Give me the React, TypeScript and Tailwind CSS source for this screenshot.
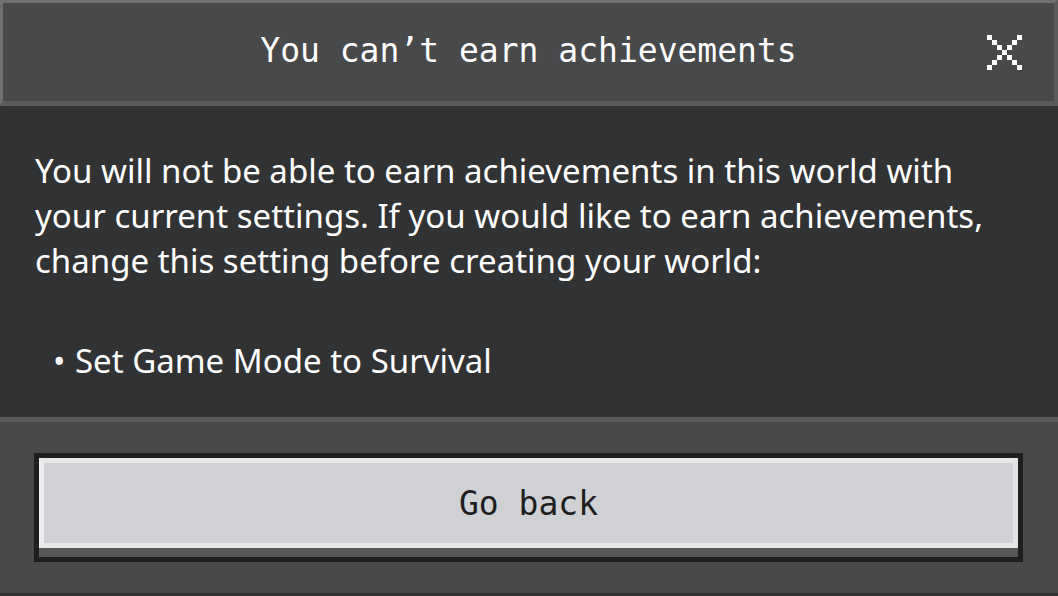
import React from "react";

function PixelX() {
  const cells: [number, number][] = [
    [0, 0], [6, 0], [1, 1], [5, 1], [2, 2], [4, 2], [3, 3],
    [2, 4], [4, 4], [1, 5], [5, 5], [0, 6], [6, 6],
  ];
  return (
    <svg width="35" height="35" viewBox="0 0 7 7" shapeRendering="crispEdges">
      {cells.map(([x, y]) => (
        <rect key={`${x}-${y}`} x={x} y={y} width="1" height="1" fill="#ffffff" />
      ))}
    </svg>
  );
}

export default function App() {
  const mono = { fontFamily: '"DejaVu Sans Mono", "Liberation Mono", monospace' };
  return (
    <div className="w-[1058px] h-[596px] flex flex-col overflow-hidden bg-[#313233]">
      {/* Header */}
      <div className="relative h-[106px] shrink-0 bg-[#48494a] border-t-[3px] border-l-[3px] border-r-[4px] border-b-[5px] border-t-[#6f6f6f] border-l-[#6f6f6f] border-r-[#5a5b5c] border-b-[#5a5b5c] flex items-center justify-center pb-1">
        <div className="text-[33px] text-white leading-none" style={mono}>
          You can’t earn achievements
        </div>
        <button className="absolute right-[32px] top-[32px] w-[35px] h-[35px]">
          <PixelX />
        </button>
      </div>

      {/* Body */}
      <div
        className="h-[311px] shrink-0 bg-[#313233] pt-[42px] pb-[34px] pl-[35px] pr-[20px] text-white text-[33px] leading-[45px] whitespace-nowrap"
        style={{ fontFamily: '"Noto Sans", "Open Sans", sans-serif' }}
      >
        <p>
          You will not be able to earn achievements in this world with
          <br />
          your current settings. If you would like to earn achievements,
          <br />
          change this setting before creating your world:
        </p>
        <p className="mt-[55px] pl-[18px] flex">
          <span className="w-[22px]">•</span>
          <span>Set Game Mode to Survival</span>
        </p>
      </div>

      {/* Footer */}
      <div className="flex-1 bg-[#48494a] border-t-[5px] border-t-[#5a5b5c] border-b-[3px] border-b-[#313233] pt-[31px] pl-[34px] pr-[35px]">
        <button className="w-full block border-[5px] border-[#1e1e1f] bg-[#1e1e1f]">
          <div className="border-b-[9px] border-b-[#58585a]">
            <div className="h-[90px] border-[5px] border-t-[#e6e7e9] border-l-[#ecedee] border-r-[#e2e3e5] border-b-[#e6e7e9] bg-[#d0d1d4] flex items-center justify-center">
              <span className="text-[33px] text-[#1e1e1f] leading-none" style={mono}>
                Go back
              </span>
            </div>
          </div>
        </button>
      </div>
    </div>
  );
}
